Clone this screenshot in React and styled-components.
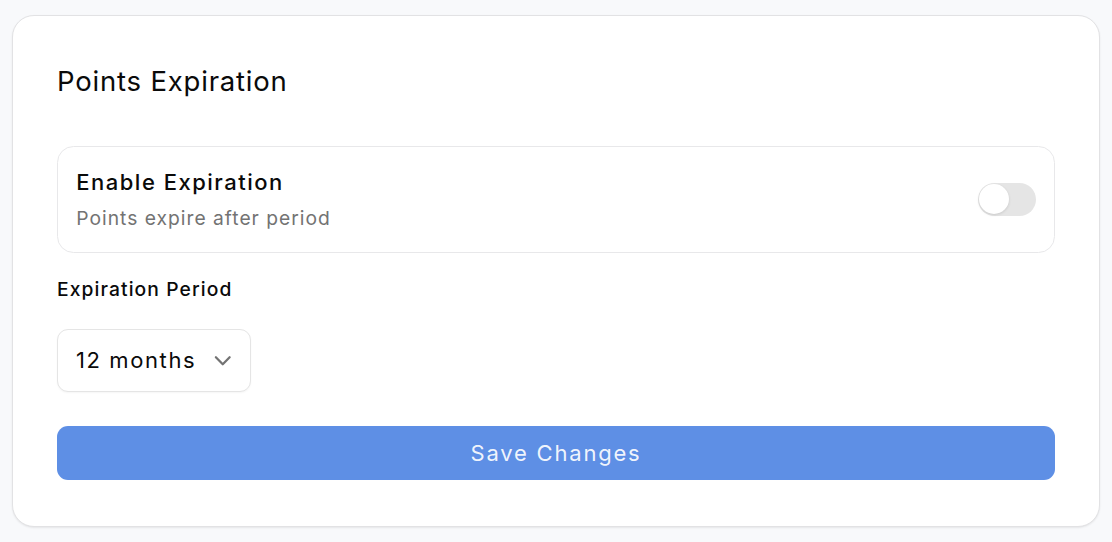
import React, { useState } from "react";
import styled, { createGlobalStyle } from "styled-components";

const Global = createGlobalStyle`
  * { box-sizing: border-box; }
  html, body { margin: 0; padding: 0; background: #f8f9fb; }
  body { font-family: Inter, "Noto Sans", "Liberation Sans", sans-serif; color: #0a0a0a; }
`;

const Page = styled.div`
  padding: 15px 12px;
  min-height: 542px;
`;

const Card = styled.section`
  background: #ffffff;
  border: 1px solid #e2e2e4;
  border-radius: 22px;
  padding: 44px 44px 46px;
  box-shadow: 0 1px 2px rgba(0, 0, 0, 0.08);
  display: flex;
  flex-direction: column;
`;

const Title = styled.h2`
  margin: 2px 0 45.5px;
  font-size: 27.5px;
  line-height: 38.5px;
  font-weight: 400;
  letter-spacing: 0.8px;
  color: #0a0a0a;
`;

const ToggleRow = styled.div`
  border: 1px solid #e8e8ea;
  border-radius: 16.5px;
  padding: 19.25px 18.25px 19.25px 18.25px;
  display: flex;
  align-items: center;
  justify-content: space-between;
`;

const RowText = styled.div`
  display: flex;
  flex-direction: column;
  gap: 5.5px;
`;

const RowTitle = styled.div`
  font-size: 22px;
  line-height: 33px;
  font-weight: 500;
  letter-spacing: 1.5px;
  color: #0a0a0a;
`;

const RowSub = styled.div`
  font-size: 19.25px;
  line-height: 27.5px;
  letter-spacing: 1px;
  color: #737373;
`;

const Track = styled.button`
  width: 58px;
  height: 33px;
  border-radius: 999px;
  border: none;
  padding: 1.5px;
  background: ${(p) => (p.$on ? "#5e8fe5" : "#e5e5e5")};
  display: flex;
  align-items: center;
  justify-content: ${(p) => (p.$on ? "flex-end" : "flex-start")};
  cursor: pointer;
`;

const Knob = styled.span`
  width: 30px;
  height: 30px;
  border-radius: 50%;
  background: #ffffff;
  box-shadow: 0 1px 3px rgba(0, 0, 0, 0.12);
`;

const Label = styled.label`
  display: block;
  margin: 23px 0 26px;
  font-size: 19.25px;
  line-height: 27.5px;
  font-weight: 500;
  letter-spacing: 1.1px;
  color: #0a0a0a;
`;

const SelectButton = styled.button`
  align-self: flex-start;
  display: flex;
  align-items: center;
  gap: 14px;
  height: 63px;
  padding: 0 14px 0 18px;
  border: 1px solid #e5e5e5;
  border-radius: 11px;
  background: #ffffff;
  box-shadow: 0 1px 2px rgba(0, 0, 0, 0.04);
  font-family: inherit;
  font-size: 22px;
  line-height: 33px;
  letter-spacing: 1.6px;
  color: #0a0a0a;
  cursor: pointer;
`;

const Chevron = styled.svg`
  width: 27.5px;
  height: 27.5px;
  margin-left: -1.6px;
  color: #737373;
`;

const SaveButton = styled.button`
  margin-top: 34px;
  height: 54px;
  width: 100%;
  border: none;
  border-radius: 11px;
  background: #5e8fe5;
  color: rgba(255, 255, 255, 0.92);
  font-family: inherit;
  font-size: 22px;
  font-weight: 400;
  letter-spacing: 1.8px;
  cursor: pointer;
`;

export default function App() {
  const [on, setOn] = useState(false);
  return (
    <Page>
      <Global />
      <Card>
        <Title>Points Expiration</Title>
        <ToggleRow>
          <RowText>
            <RowTitle>Enable Expiration</RowTitle>
            <RowSub>Points expire after period</RowSub>
          </RowText>
          <Track $on={on} onClick={() => setOn(!on)} aria-label="Enable Expiration">
            <Knob />
          </Track>
        </ToggleRow>
        <Label>Expiration Period</Label>
        <SelectButton>
          12 months
          <Chevron viewBox="0 0 24 24" fill="none" stroke="currentColor" strokeWidth="2" strokeLinecap="round" strokeLinejoin="round">
            <path d="m6 9 6 6 6-6" />
          </Chevron>
        </SelectButton>
        <SaveButton>Save Changes</SaveButton>
      </Card>
    </Page>
  );
}
